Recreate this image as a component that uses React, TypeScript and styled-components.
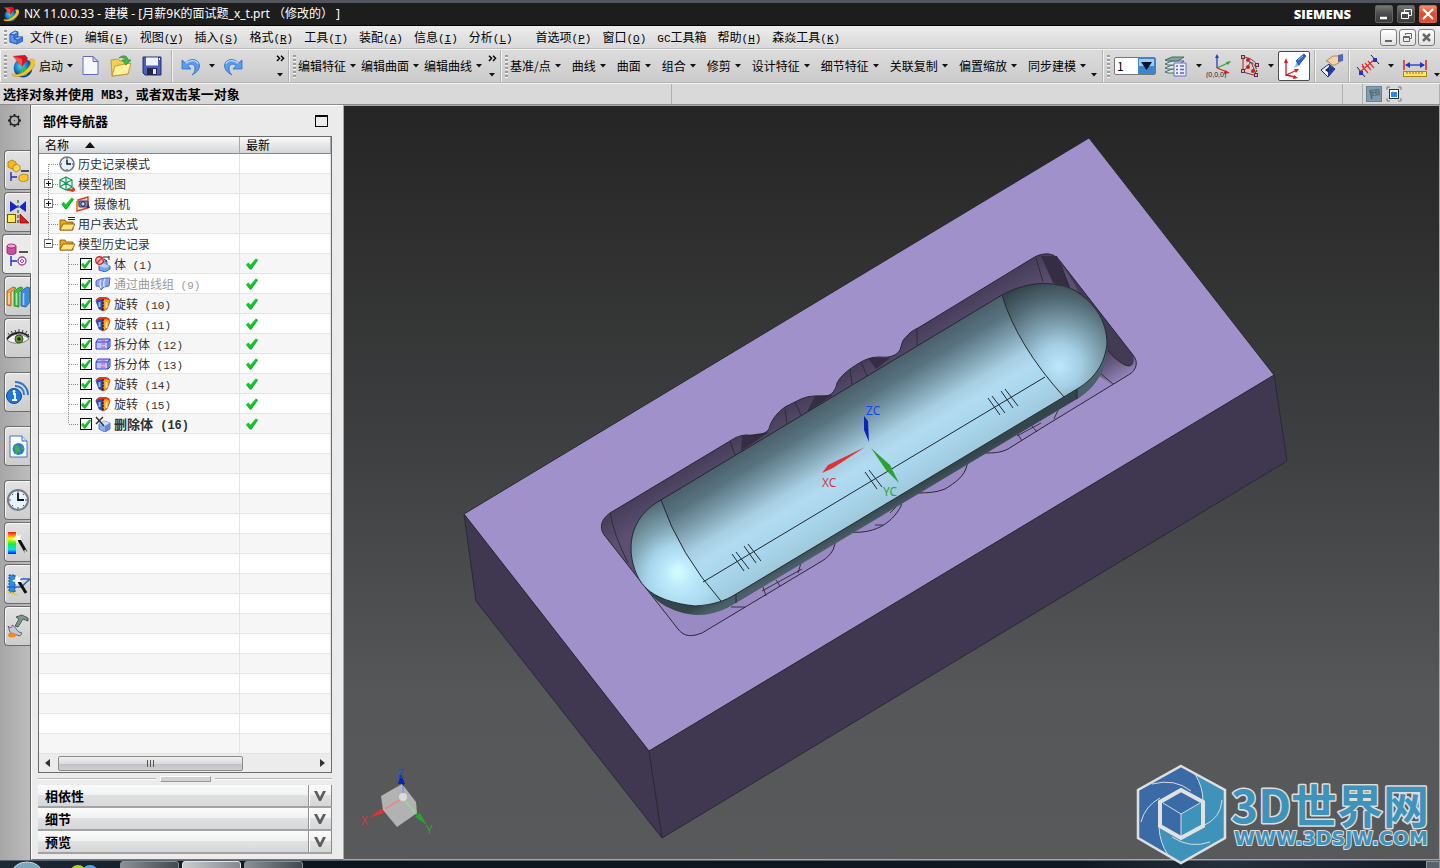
import React from "react";
import styled, { createGlobalStyle, css } from "styled-components";

const GlobalStyle = createGlobalStyle`
  *, *::before, *::after { box-sizing: border-box; }
  html, body { margin: 0; padding: 0; }
  body { overflow: hidden; background: #1d1d1d; }
  body, button, select, input, table {
    font-family: "Noto Sans CJK SC", "Liberation Sans", sans-serif;
    font-size: 12px;
    line-height: 16px;
    color: #000;
  }
  svg { display: block; flex: none; }
`;

const Frame = styled.div`
  position: relative;
  display: flex;
  flex-direction: column;
  height: 100vh;
  overflow: hidden;
`;

const Half = styled.span<{ $bold?: boolean }>`
  font-family: "Liberation Mono", monospace;
  font-size: ${(p) => (p.$bold ? 12 : 11)}px;
  line-height: 0;
  white-space: pre;
`;

/* ---------- title bar ---------- */
const TitleBar = styled.header`
  display: flex;
  align-items: center;
  flex: none;
  height: 26px;
  padding: 0 3px;
  border-top: 3px solid #54565e;
  border-bottom: 1px solid #000;
  background: #1d1d1d;
`;
const TitleText = styled.h1`
  flex: 1;
  margin: 0 0 0 5px;
  font: 400 12px/16px "Noto Sans", "Noto Sans CJK SC", sans-serif;
  text-spacing-trim: space-all;
  color: #fff;
  white-space: nowrap;
`;
const Brand = styled.span`
  margin-right: 24px;
  font: 800 13px/16px "Open Sans", sans-serif;
  color: #fff;
`;
const WindowButtons = styled.div<{ $gap: number }>`
  display: flex;
  gap: ${(p) => p.$gap}px;
`;
const WindowButton = styled.button<{ $close?: boolean }>`
  width: 18px;
  height: 18px;
  padding: 0;
  border: 1px solid ${(p) => (p.$close ? "#d9604a" : "#626262")};
  border-radius: 2px;
  background: ${(p) =>
    p.$close
      ? "linear-gradient(#f08b72, #dd4a2c 50%, #e6502f)"
      : "linear-gradient(#777, #4a4a4a 50%, #3a3a3a)"};
`;
const ChildButton = styled.button`
  width: 17px;
  height: 17px;
  padding: 0;
  border: 1px solid #7c7c7c;
  border-radius: 3px;
  background: linear-gradient(#fff, #e2e2e2);
`;

/* ---------- menu ---------- */
const MenuBar = styled.nav`
  display: flex;
  align-items: center;
  flex: none;
  height: 23px;
  padding: 0 5px 0 4px;
  border-bottom: 1px solid #bdbdbd;
  background: linear-gradient(#ececec, #d9d9d9);
`;
const Grip = styled.span<{ $tall?: boolean }>`
  flex: none;
  width: 3px;
  height: ${(p) => (p.$tall ? 23 : 15)}px;
  background: repeating-linear-gradient(#9d9d9d 0 2px, #f8f8f8 2px 3px, transparent 3px 4px);
`;
const MenuList = styled.div`
  display: flex;
  flex: 1;
  gap: 11px;
  margin-left: 7px;
`;
const MenuItem = styled.button<{ $apart?: boolean }>`
  padding: 0;
  margin-left: ${(p) => (p.$apart ? 12 : 0)}px;
  border: 0;
  background: none;
  white-space: nowrap;
`;

/* ---------- toolbar ---------- */
const ToolBar = styled.div`
  display: flex;
  flex: none;
  height: 34px;
  border-top: 1px solid #f3f3f3;
  border-bottom: 1px solid #b4b4b4;
  background: linear-gradient(#dcdcdc, #cbcbcb);
`;
const ToolGroup = styled.div<{ $gap: number; $width?: number; $grow?: boolean }>`
  display: flex;
  align-items: center;
  flex: ${(p) => (p.$grow ? "1 0 auto" : p.$width ? `0 0 ${p.$width}px` : "none")};
  gap: ${(p) => p.$gap}px;
  padding-left: 4px;
  border-right: 1px solid #b2b2b2;
  box-shadow: inset 1px 0 #f3f3f3;
`;
const ToolButton = styled.button<{ $lead?: number; $active?: boolean; $width?: number }>`
  display: flex;
  align-items: center;
  justify-content: center;
  flex: none;
  gap: 4px;
  padding: 0;
  margin-left: ${(p) => p.$lead ?? 0}px;
  width: ${(p) => (p.$width ? `${p.$width}px` : "auto")};
  border: 0;
  background: none;
  white-space: nowrap;
  ${(p) =>
    p.$active &&
    css`
      height: 30px;
      border: 1px solid #4c4c4c;
      border-radius: 2px;
      background: #fff;
    `}
`;
const ToolDivider = styled.span`
  flex: none;
  width: 2px;
  height: 100%;
  border-left: 1px solid #b2b2b2;
  background: #f3f3f3;
`;
const Overflow = styled.button<{ $auto?: boolean; $slim?: boolean }>`
  display: flex;
  flex-direction: column;
  align-items: center;
  justify-content: space-between;
  flex: none;
  width: ${(p) => (p.$slim ? 6 : 10)}px;
  height: 22px;
  margin: 0 ${(p) => (p.$slim ? 5 : 3)}px 0 ${(p) => (p.$auto ? "auto" : p.$slim ? "-6px" : "0")};
  padding: 0;
  border: 0;
  background: none;
`;
const ComboBox = styled.label`
  display: grid;
  width: 42px;
  height: 18px;
  border: 1px solid #777;
  border-radius: 2px;
  background: #fff;
  align-items: center;
  & > * { grid-area: 1 / 1; }
  & > svg { justify-self: end; pointer-events: none; }
`;
const ComboSelect = styled.select`
  appearance: none;
  width: 100%;
  height: 16px;
  padding: 0 2px;
  border: 0;
  background: none;
`;

/* ---------- cue line ---------- */
const CueLine = styled.div`
  display: flex;
  flex: none;
  height: 22px;
  border-top: 1px solid #f3f3f3;
  border-bottom: 1px solid #8c8c8c;
  background: #d9d9d9;
`;
const CueCell = styled.div<{ $width?: number }>`
  display: flex;
  align-items: center;
  gap: 4px;
  flex: ${(p) => (p.$width ? `0 0 ${p.$width}px` : "1 1 0")};
  padding-left: 3px;
  border-right: 1px solid #b0b0b0;
  font-size: 13px;
  font-weight: 700;
  white-space: nowrap;
`;

/* ---------- body ---------- */
const Body = styled.main`
  display: flex;
  flex: 1;
  min-height: 0;
`;
const Rail = styled.nav`
  display: flex;
  flex-direction: column;
  gap: 2px;
  flex: 0 0 31px;
  padding: 8px 0 0 4px;
  border-right: 1px solid #666;
  background: linear-gradient(90deg, #a6a6a6, #bcbcbc);
`;
const GearButton = styled.button`
  align-self: flex-start;
  height: 35px;
  padding: 0 0 20px 3px;
  border: 0;
  background: none;
`;
const RailTab = styled.button<{ $gap?: boolean; $active?: boolean }>`
  display: flex;
  align-items: center;
  justify-content: center;
  flex: none;
  height: 40px;
  margin: ${(p) => (p.$gap ? "12px" : "0")} ${(p) => (p.$active ? "-1px" : "0")} 0
    ${(p) => (p.$active ? "-2px" : "0")};
  padding: 0;
  border: 1px solid #6c6c6c;
  border-right: 0;
  border-radius: 4px 0 0 4px;
  background: ${(p) => (p.$active ? "#ebebeb" : "linear-gradient(#e2e2e2, #cdcdcd)")};
  box-shadow: inset 1px 1px #f6f6f6;
`;
const Navigator = styled.section`
  display: flex;
  flex-direction: column;
  flex: 0 0 312px;
  padding: 0 11px 0 6px;
  border-top: 1px solid #fff;
  border-bottom: 1px solid #777;
  border-left: 1px solid #fff;
  background: #ebebeb;
`;
const NavHeader = styled.div`
  display: flex;
  align-items: center;
  justify-content: space-between;
  flex: none;
  height: 30px;
  padding: 0 4px 0 5px;
`;
const NavTitle = styled.h2`
  margin: 0;
  font-size: 13px;
  line-height: 16px;
  font-weight: 700;
`;
const BoxButton = styled.button`
  width: 13px;
  height: 12px;
  padding: 0;
  border: 1px solid #000;
  border-top-width: 2px;
  background: none;
`;
const TreeBox = styled.div`
  display: flex;
  flex-direction: column;
  flex: 1;
  min-height: 0;
  border: 1px solid #6c6c6c;
  background: #fff;
`;
const TreeScroll = styled.div`
  flex: 1;
  min-height: 0;
  overflow: hidden;
`;
const Tree = styled.table`
  width: 100%;
  table-layout: fixed;
  border-collapse: separate;
  border-spacing: 0;
`;
const Head = styled.th`
  height: 17px;
  padding: 0 6px;
  border-bottom: 1px solid #888;
  border-right: 1px solid #a8a8a8;
  background: linear-gradient(#fafafa, #e6e8ea 50%, #d4d7d9);
  font-weight: 400;
  line-height: 16px;
  text-align: left;
`;
const HeadInner = styled.span`
  display: flex;
  align-items: center;
  gap: 16px;
`;
const Row = styled.tr`
  &:nth-child(odd) { background: #fff; }
  &:nth-child(even) { background: #f6f6f6; }
`;
const Cell = styled.td`
  height: 20px;
  padding: 0;
  border-bottom: 1px solid #e4e4e4;
  border-right: 1px solid #e4e4e4;
`;
const Node = styled.div<{ $dim?: boolean; $bold?: boolean }>`
  display: flex;
  align-items: center;
  height: 19px;
  color: ${(p) => (p.$dim ? "#9a9a9a" : "#303030")};
  font-size: ${(p) => (p.$bold ? 13 : 12)}px;
  font-weight: ${(p) => (p.$bold ? 700 : 400)};
  white-space: pre;
`;
const NodeLabel = styled.span`
  margin-left: 3px;
  line-height: 16px;
`;
const Status = styled.div`
  padding-left: 6px;
`;
const Tick = styled.label`
  display: grid;
  place-items: center;
  width: 12px;
  height: 12px;
  margin-right: 3px;
  & > * { grid-area: 1 / 1; }
  & > svg { pointer-events: none; }
`;
const TickInput = styled.input`
  appearance: none;
  width: 12px;
  height: 12px;
  margin: 0;
  border: 1px solid #000;
  background: #fff;
`;
const HScroll = styled.div`
  display: flex;
  align-items: center;
  justify-content: space-between;
  flex: none;
  height: 18px;
  padding: 0 6px;
  background: #ececec;
`;
const ScrollArrow = styled.button`
  padding: 0;
  border: 0;
  background: none;
`;
const Thumb = styled.div`
  display: flex;
  align-items: center;
  justify-content: center;
  width: 185px;
  height: 15px;
  margin: 0 auto 0 8px;
  border: 1px solid #8b8b8b;
  border-radius: 2px;
  background: linear-gradient(#f0f0f0, #dcdcde 50%, #bfc1c4 52%, #cfd0d2);
`;
const Splitter = styled.div`
  display: flex;
  align-items: center;
  gap: 4px;
  flex: none;
  height: 12px;
  &::before, &::after { content: ""; flex: 1; height: 2px; border-top: 1px solid #b8b8b8; background: #fff; }
`;
const SplitHandle = styled.span`
  width: 51px;
  height: 6px;
  border: 1px solid #999;
  border-top-color: #fff;
  border-left-color: #fff;
  background: #d2d2d2;
`;
const Sections = styled.div`
  flex: none;
  margin-bottom: 5px;
`;
const SectionButton = styled.button`
  display: flex;
  width: 100%;
  height: 23px;
  padding: 0;
  border: 0;
  border-bottom: 2px solid #a2a2a2;
  border-right: 1px solid #8a8a8a;
  background: linear-gradient(#fbfbfb, #f0f1f1 48%, #dfe1e2 50%, #d5d7d9);
  text-align: left;
`;
const SectionName = styled.span`
  flex: 1;
  padding-left: 7px;
  font-size: 13px;
  line-height: 22px;
  font-weight: 700;
`;
const SectionArrow = styled.span`
  display: flex;
  align-items: center;
  justify-content: center;
  width: 23px;
  height: 21px;
  border-left: 1px solid #909090;
  box-shadow: inset 1px 0 #fff;
`;
const Viewport = styled.section`
  flex: 1;
  min-width: 0;
  border: 1px solid #e59a48;
  background: linear-gradient(#252525, #3e3f40 45%, #565758 78%, #58595a);
`;

/* ---------- taskbar and watermark ---------- */
const TaskBar = styled.footer`
  display: flex;
  align-items: flex-start;
  flex: none;
  height: 8px;
  overflow: hidden;
  border-top: 1px solid #59636b;
  background: linear-gradient(90deg, #1c2a36, #0d151e 20%, #101923 75%, #25303d 85%, #121b26);
`;
const TaskButton = styled.button<{ $active?: boolean }>`
  width: 59px;
  height: 30px;
  margin-right: 3px;
  padding: 0;
  border: 1px solid ${(p) => (p.$active ? "#e3e6e8" : "#8a9298")};
  border-radius: 3px;
  background: ${(p) =>
    p.$active ? "linear-gradient(90deg, #c9cdd0, #85898d)" : "linear-gradient(90deg, #8b9196, #42494f)"};
`;
const Clock = styled.time`
  margin: 3px 48px 0 auto;
  color: #fff;
  line-height: 16px;
`;
const ShowDesktop = styled.button`
  width: 14px;
  height: 30px;
  padding: 0;
  border: 1px solid #8d959b;
  background: #59626a;
`;
const Watermark = styled.div`
  position: absolute;
  right: 4px;
  bottom: 3px;
`;

/* ---------- small drawings ---------- */
const Caret = () => (
  <svg width="6" height="4" viewBox="0 0 6 4"><path d="M0 0h6L3 3.5z" fill="#111" /></svg>
);
const More = () => (
  <svg width="9" height="7" viewBox="0 0 9 7" fill="none" stroke="#000" strokeWidth="1.4">
    <path d="M1 .7l2.6 2.6L1 6M5 .7l2.6 2.6L5 6" />
  </svg>
);
const Check = ({ size = 12 }: { size?: number }) => (
  <svg width={size} height={size} viewBox={size > 12 ? "-2 -1 15 15" : "0 0 12 12"}>
    <path d="M0 6.500L2.400 4.500l2 2.300L9.800.5l2.200 1.300L5.400 11.500H4z" fill="#12c92b" />
    <path d="M.8 7.200l3.600 4L11.800 2" fill="none" stroke="#0a8f1c" strokeWidth=".6" />
  </svg>
);
const Logo = ({ size }: { size: number }) => (
  <svg width={size} height={size} viewBox="0 0 24 24">
    <defs>
      <radialGradient id="globe" cx=".4" cy=".4"><stop offset="0" stopColor="#4fe0e0" /><stop offset=".6" stopColor="#1a83cf" /><stop offset="1" stopColor="#0d3f9c" /></radialGradient>
    </defs>
    <circle cx="12" cy="14" r="9.4" fill="url(#globe)" />
    <path d="M12 13c4 0 6 3 4 8-3 2-6 1-7-1s1-6 3-7z" fill="#2fc24a" opacity=".8" />
    <path d="M1 20c7 2 14-2 18-9 1-2 1-4-1-5 4-2 7 0 6 4-2 7-13 15-22 12z" fill="#f5c62c" stroke="#c08a12" strokeWidth=".5" />
    <path d="M2 2l12-1 3 3-6 9z" fill="#d8131c" /><path d="M2 2l9 11 0-8z" fill="#f4534f" />
  </svg>
);
const CubeIcon = () => (
  <svg width="14" height="15" viewBox="0 0 14 15" stroke="#1d4fae" strokeWidth=".7" strokeLinejoin="round">
    <path d="M1 4l5-3 3 1v5l4 0 1 1v3l-6 3-7-2z" fill="#3b7be0" />
    <path d="M1 4l5-3 3 1-4 3z" fill="#a9ccff" /><path d="M5 9l4-2h5l-6 3z" fill="#a9ccff" /><path d="M1 4l4 1v4l3 1v4l-7-2z" fill="#5b95f0" />
  </svg>
);
const NewIcon = () => (
  <svg width="20" height="22" viewBox="0 0 20 22"><path d="M2 1.5h10l5 5v13H2z" fill="#f7f7ff" stroke="#6668c4" /><path d="M12 1.5v5h5z" fill="#d3d6f6" stroke="#6668c4" /></svg>
);
const OpenIcon = () => (
  <svg width="24" height="24" viewBox="0 0 24 24">
    <path d="M2 6l7-1 2 2 8-1v14L3 22z" fill="#f2ce56" stroke="#b78d23" strokeWidth=".8" />
    <path d="M6 12l16-3-3 11-16 2z" fill="#fff09a" stroke="#b78d23" strokeWidth=".8" />
    <path d="M10 4c4-4 9-2 9 2h3l-5 5-4-5h3c0-2-3-3-6-2z" fill="#45b34e" stroke="#1f7f2b" strokeWidth=".6" />
  </svg>
);
const SaveIcon = () => (
  <svg width="22" height="20" viewBox="0 0 22 20">
    <path d="M2 1h18v18H4l-2-2z" fill="#4b5fb4" stroke="#23306f" /><path d="M5 1.5h12v8H5z" fill="#eef2ff" /><path d="M6 12h10v7H6z" fill="#23264a" /><path d="M12 13h3v5h-3z" fill="#dfe6ff" /><path d="M18 2h1v2h-1z" fill="#fff" />
  </svg>
);
const UndoIcon = ({ flip }: { flip?: boolean }) => (
  <svg width="20" height="20" viewBox="0 0 20 20">
    <g transform={flip ? "matrix(-1 0 0 1 20 0)" : undefined}>
      <path d="M1 4v9h9L7 9.500c3-2.500 7-1 7 2.500 0 3-1 5-3 7 4-2 7.500-5 7.500-9.500C18.500 4 10 .5 4.500 7z" fill="#5b9bea" stroke="#2f6fc8" strokeWidth=".8" />
      <path d="M5 7.500C9 3 16 4 17 8" fill="none" stroke="#b5d8ff" strokeWidth="1.200" />
    </g>
  </svg>
);
const LayersIcon = () => (
  <svg width="24" height="24" viewBox="0 0 24 24" stroke="#41625b" strokeWidth=".9">
    {[15, 11, 7, 3].map((y) => (<path key={y} d={`M1 ${y + 3}l7-3h12l-6 4H4z`} fill={y === 3 ? "#7da899" : "#dbe9e5"} />))}
    <path d="M10 9h12v13H10z" fill="#eef0ff" stroke="#5560d4" />
    <path d="M12 12h2M16 12h4M12 15.500h2M16 15.500h4M12 19h2M16 19h4" stroke="#5560d4" strokeWidth="1.400" />
  </svg>
);
const CsysIcon = () => (
  <svg width="26" height="24" viewBox="0 0 26 24" fill="none">
    <path d="M11 3v11" stroke="#2340c8" strokeWidth="1.300" /><path d="M11 0l-2 4h4z" fill="#2340c8" />
    <path d="M11 14l11-5" stroke="#28a53a" strokeWidth="1.300" /><path d="M25 7l-5 1 2 3z" fill="#28a53a" />
    <path d="M11 14l10 4" stroke="#d22" strokeWidth="1.300" /><path d="M24 19l-5-3-1 4z" fill="#d22" />
    <text x="0" y="23" fontSize="7" fill="#222" fontFamily="Liberation Sans">(0,0,0)</text>
  </svg>
);
const PointsIcon = () => (
  <svg width="20" height="24" viewBox="0 0 20 24" fill="none" stroke="#333">
    <path d="M3 3v15l14 4L11 8 3 18M3 3c6 0 12 4 15 9" stroke="#8d3030" /><path d="M9 8c5 0 8 5 8 13" strokeDasharray="2 1" />
    {[[3, 3], [17, 11], [3, 17], [16, 21]].map(([x, y]) => (<rect key={`${x}-${y}`} x={x - 1.500} y={y - 1.500} width="3" height="3" fill="#f2b84a" stroke="#5c2a6b" />))}
    {[[8, 6], [8, 13], [13, 17]].map(([x, y]) => (<circle key={`${x}-${y}`} cx={x} cy={y} r="2" fill="#e01818" stroke="none" />))}
  </svg>
);
const WcsIcon = () => (
  <svg width="26" height="26" viewBox="0 0 26 26" fill="none" stroke="#d41c1c" strokeWidth="1.300">
    <path d="M5 8v14l9-4M5 22l9 2" /><path d="M5 5l-2 5h4zM18 16l-5 0 2 4zM17 25l-4-3-1 4z" fill="#d41c1c" stroke="none" />
    <path d="M13 15l3-6 3 3z" fill="#7fb2ea" stroke="none" /><path d="M15 8l3-3 5-4 2 2-4 5-3 4z" fill="#2b62c8" stroke="#173d8e" strokeWidth=".7" /><path d="M17 7l5-4" stroke="#8ec0ff" strokeWidth="1" />
  </svg>
);
const HandIcon = () => (
  <svg width="24" height="24" viewBox="0 0 24 24">
    <path d="M1 16l8-6 6 5-7 8z" fill="#f4f6fb" stroke="#1c2c6b" /><path d="M9 10l6 5-7 8v-3z" fill="#1f3fa0" /><path d="M5 16l4-3v6z" fill="#1c2c6b" />
    <path d="M6 7l7-5 7 0v6l-5 3-3 0-3-3z" fill="#f4d2a2" stroke="#a8793f" strokeWidth=".8" /><path d="M18 1l5-1v7l-5 1z" fill="#4b66bd" />
  </svg>
);
const MeasureIcon = () => (
  <svg width="24" height="24" viewBox="0 0 24 24" fill="none">
    <path d="M4 18L19 5" stroke="#e03030" strokeWidth="1.300" /><path d="M6 12l6 7M9 9l6 7M12 7l6 7M8 13l-2-3" stroke="#e03030" strokeWidth="1.200" />
    <path d="M1 13l8 10M15 1l8 9" stroke="#222" /><rect x="3" y="17" width="4" height="4" fill="#2430d0" /><rect x="17" y="4" width="4" height="4" fill="#2430d0" />
  </svg>
);
const RulerIcon = () => (
  <svg width="26" height="24" viewBox="0 0 26 24">
    <path d="M2 6v10M24 6v10" stroke="#d22" strokeWidth="1.500" /><path d="M4 11h18" stroke="#1b36c8" strokeWidth="1.300" /><path d="M3 11l5-3v6zM23 11l-5-3v6z" fill="#1b36c8" />
    <rect x="1.500" y="17.500" width="23" height="5" fill="#ffe860" stroke="#a8861a" /><path d="M5 18v2M8 18v2M11 18v2M14 18v2M17 18v2M20 18v2" stroke="#b55a1a" />
  </svg>
);

type GlyphKind = "clock" | "view" | "camera" | "expr" | "folder" | "body" | "mesh" | "revolve" | "split" | "delete";
const Glyph = ({ kind }: { kind: GlyphKind }) => (
  <svg width="16" height="16" viewBox="0 0 16 16">
    {kind === "clock" && (<>
      <circle cx="8" cy="8" r="7" fill="#e4f1fc" stroke="#777" strokeWidth="1.600" />
      <path d="M8 3.500V8h4" fill="none" stroke="#111" strokeWidth="1.400" />
      <path d="M8 2v1M8 13v1M2 8h1M13 8h1" stroke="#234" />
    </>)}
    {kind === "view" && (<>
      <path d="M7 1l6 3v7l-6 3-6-3V4zM1 4l6 3 6-3M7 1v13M1 11l6-4 6 4" fill="none" stroke="#12995b" strokeWidth="1.200" />
      <path d="M8 14l6-1v-2l2 3-3 2v-1z" fill="#e8331c" stroke="#e8331c" />
    </>)}
    {kind === "camera" && (<>
      <path d="M3 4l10-3v11L2 15z" fill="#f6e7e0" stroke="#dd3b17" strokeWidth="1.400" /><path d="M2 5v9" stroke="#f08b2c" strokeWidth="2" />
      <rect x="4" y="5" width="9" height="6" rx="1" fill="#7c8cc4" stroke="#28316b" /><circle cx="8" cy="8" r="2.200" fill="#c5d4ff" stroke="#222" /><path d="M13 7l2 5-3 0z" fill="#333" />
    </>)}
    {(kind === "folder" || kind === "expr") && (<>
      <path d="M1 4h5l1 2h7v8H1z" fill="#e8a91b" stroke="#805400" strokeWidth=".8" /><path d="M4 8h12l-3 6H1z" fill="#ffe37c" stroke="#805400" strokeWidth=".8" />
      {kind === "expr" && <path d="M9 1.500h7M9 3.500h7" stroke="#1c249d" />}
    </>)}
    {kind === "body" && (<>
      <path d="M4 9l4-2V5h4v4l3 1v3l-5 3-6-2z" fill="#7aa5ee" stroke="#274a9d" strokeWidth=".8" /><path d="M4 9l4-2 4 2 3 1-5 2-6-2z" fill="#b9d2ff" />
      <path d="M8 1h6M14 0v4M9 3l3 2" stroke="#222" /><circle cx="4.500" cy="4.500" r="3.800" fill="#f3c9c6" stroke="#d92222" strokeWidth="1.400" /><path d="M2 7l5-5" stroke="#d92222" strokeWidth="1.400" />
    </>)}
    {kind === "mesh" && (<>
      <path d="M1 5c4-3 9-3 14-3l-1 8-5 1-3 3c0-3-2-4-5-4z" fill="#8ba0ea" stroke="#5269cf" /><path d="M6 4c-2 3-1 5 0 8M10 3c-2 3-1 5-1 8" fill="none" stroke="#e3e9ff" strokeWidth="1.300" />
    </>)}
    {kind === "revolve" && (<>
      <path d="M8 2C4 1 1 3 1 5l3 8 4 2z" fill="#2c4cc4" stroke="#1b2f85" strokeWidth=".6" /><path d="M8 2c4-1 7 1 7 3l-3 8-4 2z" fill="#f6a21a" stroke="#c52f12" strokeWidth=".8" />
      <path d="M1 5C2 1 5 1 8 1s6 0 7 4c-3-2-4-2-7-1-3-1-4-1-7 1z" fill="#e23c1a" /><path d="M4.500 6v5" stroke="#a9bdff" strokeWidth="2" /><path d="M11.500 6v6" stroke="#ffe489" strokeWidth="2" /><path d="M8 3v12" stroke="#111" strokeDasharray="2 1" />
    </>)}
    {kind === "split" && (<>
      <path d="M1 6l2-3h12v8l-2 2H1z" fill="#bcc7f8" stroke="#2f35e0" /><path d="M1 6h12v7M13 6l2-3" fill="none" stroke="#2f35e0" /><path d="M7 4v8M9 4v8" stroke="#e05068" strokeDasharray="2 1" />
    </>)}
    {kind === "delete" && (<>
      <path d="M4 8l5-3 6 2v6l-5 3-6-3z" fill="#8fb0ee" stroke="#3d65c4" strokeWidth=".8" /><path d="M4 8l6 2 5-3-6-2z" fill="#cfe0ff" /><path d="M10 10v6l5-3V7z" fill="#5f88df" />
      <path d="M1 1l8 9M8 1L1 8" stroke="#333" strokeWidth="1.500" />
    </>)}
  </svg>
);

const Branch = ({ box, first, last }: { box?: "+" | "-"; first?: boolean; last?: boolean }) => (
  <svg width="20" height="19" viewBox="0 0 20 19" fill="none" shapeRendering="crispEdges">
    <path d={`M9.500 ${first ? 10 : 0}V${last ? 10 : 19}M9.500 10.500H19`} stroke="#8a8a8a" strokeDasharray="1 1" />
    {box && (<>
      <rect x="5.500" y="5.500" width="8" height="8" fill="#fff" stroke="#777" />
      <path d={box === "+" ? "M7 9.500h5M9.500 7v5" : "M7 9.500h5"} stroke="#111" />
    </>)}
  </svg>
);
const SubBranch = ({ last }: { last?: boolean }) => (
  <svg width="41" height="19" viewBox="0 0 41 19" fill="none" shapeRendering="crispEdges">
    <path d={`M29.500 0V${last ? 10 : 19}M29.500 10.500H39`} stroke="#8a8a8a" strokeDasharray="1 1" />
  </svg>
);

/* ---------- resource bar icons ---------- */
const railIcons: { name: string; art: React.ReactNode; gap?: boolean; active?: boolean }[] = [
  { name: "装配导航器", art: (<>
    <path d="M2 4l4-2 4 2v5l-4 2-4-2z" fill="#f5b81f" stroke="#a36f00" strokeWidth=".7" /><path d="M7 8l4-2 3 2v4l-4 2-3-2z" fill="#ffd84c" stroke="#a36f00" strokeWidth=".7" />
    <path d="M15 13h8" stroke="#111" strokeWidth="1.400" /><path d="M5 14v9M5 19h6" stroke="#1f2fc0" strokeWidth="1.400" /><path d="M13 18l4-2 5 1v5l-5 2-4-2z" fill="#ffc62a" stroke="#a36f00" strokeWidth=".7" />
  </>) },
  { name: "约束导航器", art: (<>
    <path d="M4 1v11l8-5zM20 1v11l-7-5z" fill="#1327c9" /><path d="M12 0v24" stroke="#222" strokeDasharray="3 2" /><rect x="1.500" y="14.500" width="8" height="8" fill="#ffec4a" stroke="#6d5a00" /><path d="M14 14v9h9z" fill="#e21b1b" stroke="#700" strokeWidth=".7" />
  </>) },
  { name: "部件导航器", active: true, art: (<>
    <path d="M2 4v7c2 2 7 2 9 0V4z" fill="#cf4fa5" stroke="#7c1e5f" strokeWidth=".8" /><ellipse cx="6.500" cy="4" rx="4.500" ry="2" fill="#f0a6d8" stroke="#7c1e5f" strokeWidth=".8" />
    <path d="M14 10h9" stroke="#111" strokeWidth="1.400" /><path d="M6 14v10M6 19h6" stroke="#1f2fc0" strokeWidth="1.400" /><circle cx="17" cy="19" r="4" fill="#fff" stroke="#9b3f9b" strokeWidth="1.300" /><circle cx="17" cy="19" r="1.500" fill="none" stroke="#9b3f9b" />
  </>) },
  { name: "重用库", art: (<>
    <path d="M1 7l6-4 3 1-5 4v14l-4-1z" fill="#f2a03a" stroke="#8c4c00" strokeWidth=".7" /><path d="M8 7l6-4 3 1-4 4v15l-5-1z" fill="#3ac13f" stroke="#177c1b" strokeWidth=".7" /><path d="M15 7l6-4 3 1v14l-4 5-5-1z" fill="#3b8be0" stroke="#184e94" strokeWidth=".7" />
    <path d="M3 9v11M10.500 9v12M17.500 9v12" stroke="#fff" strokeWidth="1.500" opacity=".6" />
  </>) },
  { name: "视图", art: (<>
    <path d="M1 14c5-7 15-8 22-1-6 5-16 6-22 1z" fill="#f2f2f2" stroke="#555" strokeWidth=".7" /><circle cx="13" cy="13" r="4" fill="#6f9c35" stroke="#33521a" /><circle cx="13" cy="13" r="1.800" fill="#16240a" />
    <path d="M1 13c5-7 15-9 22-2" fill="none" stroke="#222" strokeWidth="1.800" /><path d="M4 10L2 7M7 8L5 5M10 7L9 4M13 6V3M16 7l1-3M19 8l2-3M21 10l2-2" fill="none" stroke="#444" />
  </>) },
  { name: "信息", gap: true, art: (<>
    <path d="M9 2c8 0 13 6 13 13M9 6c6 0 9 4 9 9" fill="none" stroke="#2f74cf" strokeWidth="2" /><circle cx="8" cy="16" r="7.500" fill="#1e78dc" stroke="#0e4b9b" /><path d="M7 14h2v6M6 20h5" stroke="#fff" strokeWidth="1.800" fill="none" /><circle cx="8" cy="11.500" r="1.400" fill="#fff" />
  </>) },
  { name: "网页", gap: true, art: (<>
    <path d="M4 2h12l5 5v16H4z" fill="#fff" stroke="#4571b8" /><path d="M16 2v5h5" fill="#d6e5f9" stroke="#4571b8" /><circle cx="12.500" cy="15" r="6" fill="#2b7fce" /><path d="M8 13c3-4 5 0 6 2s-2 5-4 4zM15 11l3 4-2 1z" fill="#43ae49" />
  </>) },
  { name: "历史记录", gap: true, art: (<>
    <circle cx="12" cy="12" r="10" fill="#e5f2ff" stroke="#777c82" strokeWidth="2" /><path d="M12 5v7h6" fill="none" stroke="#111" strokeWidth="1.800" /><path d="M12 3v2M12 19v2M3 12h2M19 12h2M6 6l1 1M18 6l-1 1M6 18l1-1M18 18l-1-1" stroke="#456" />
  </>) },
  { name: "可视化", art: (<>
    <rect x="2" y="2" width="8" height="22" fill="url(#spectrum)" /><path d="M12 8l8 14" stroke="#111" strokeWidth="3" /><path d="M19 20l1 3" stroke="#ddd" strokeWidth="2" /><path d="M11 3l1 3 3-1-1 3 2 2-4 0-1 3-2-3-3-1 3-2z" fill="#fff" />
  </>) },
  { name: "加工向导", art: (<>
    <rect x="3" y="3" width="6" height="17" fill="#2c8de0" stroke="#1554a0" strokeDasharray="2 1" /><path d="M10 7h14l-9 8H1" fill="none" stroke="#2c62c8" strokeWidth="1.500" /><path d="M2 20l10 3" stroke="#f0c516" strokeWidth="2" strokeDasharray="2 1" />
    <path d="M12 8l8 13" stroke="#111" strokeWidth="3" /><path d="M11 3l1 3 3-1-1 3 2 2-4 0-1 3-2-3-3-1 3-2z" fill="#fff" />
  </>) },
  { name: "角色", art: (<>
    <path d="M10 3l6-2 6 3v3l-5-2-5 8-3-1 4-7z" fill="#7f988c" stroke="#33423b" strokeWidth=".8" /><path d="M2 12c2 3 5 1 4-1 4 2 4 5 7 7l3 1-2 3c-4-2-8-1-10-4z" fill="#c4c9d8" stroke="#4b4f66" strokeWidth=".8" /><ellipse cx="6" cy="21" rx="4" ry="2.500" fill="#f28b1e" />
  </>) },
];

/* ---------- data ---------- */
const menus: { label: string; accel?: string; pre?: string; apart?: boolean }[] = [
  { label: "文件", accel: "F" }, { label: "编辑", accel: "E" }, { label: "视图", accel: "V" }, { label: "插入", accel: "S" },
  { label: "格式", accel: "R" }, { label: "工具", accel: "T" }, { label: "装配", accel: "A" }, { label: "信息", accel: "I" },
  { label: "分析", accel: "L" }, { label: "首选项", accel: "P", apart: true }, { label: "窗口", accel: "O" },
  { label: "工具箱", pre: "GC" }, { label: "帮助", accel: "H" }, { label: "森焱工具", accel: "K" },
];
const nodes: { label: string; n?: number; kind: GlyphKind; box?: "+" | "-"; child?: boolean; dim?: boolean; bold?: boolean; first?: boolean; last?: boolean; mark?: boolean }[] = [
  { label: "历史记录模式", kind: "clock", first: true },
  { label: "模型视图", kind: "view", box: "+" },
  { label: "摄像机", kind: "camera", box: "+", mark: true },
  { label: "用户表达式", kind: "expr" },
  { label: "模型历史记录", kind: "folder", box: "-", last: true },
  { label: "体", n: 1, kind: "body", child: true },
  { label: "通过曲线组", n: 9, kind: "mesh", child: true, dim: true },
  { label: "旋转", n: 10, kind: "revolve", child: true },
  { label: "旋转", n: 11, kind: "revolve", child: true },
  { label: "拆分体", n: 12, kind: "split", child: true },
  { label: "拆分体", n: 13, kind: "split", child: true },
  { label: "旋转", n: 14, kind: "revolve", child: true },
  { label: "旋转", n: 15, kind: "revolve", child: true },
  { label: "删除体", n: 16, kind: "delete", child: true, bold: true, last: true },
];
const blankRows = Array.from({ length: 16 }, (_, i) => i);

/* ---------- 3D scene ---------- */
const POCKET =
  "M610 513L730 441C736 437 741 435 747 435C754 436 764 436 769 429C771 420 777 413 785 407L797 401C808 395 815 396 825 396C832 396 836 389 837 383C840 377 845 373 850 369C862 361 868 357 880 357C889 358 896 356 900 350C902 344 902 340 907 336C910 332 914 330 918 328L1033 258C1043 252 1054 252 1060 261L1133 355C1139 362 1136 370 1130 374L1040 429L1008 449C1000 453 993 453 985 453C975 452 968 458 967 465C965 476 955 483 945 489C935 493 925 493 912 493C903 495 902 500 901 506C896 516 888 523 880 527C870 532 860 533 845 532C836 535 836 542 833 550C830 555 827 558 822 561L702 633C692 637 684 637 678 629L605 536C600 530 599 521 610 513Z";
const FACE =
  "M661 500L1002 295C1024 283 1047 280 1070 288C1092 299 1107 319 1107 344C1105 362 1096 378 1077 389L736 594C725 601 713 605 695 606C675 604 655 598 645 587C636 578 631 562 631 548C631 528 641 511 661 500Z";
const LEFT_CAP = "M661 500C641 511 631 528 631 548C631 562 636 578 645 587C655 598 675 604 695 606C705 606 713 604 721 601Q680 555 661 500Z";
const RIGHT_CAP = "M1002 295C1024 283 1047 280 1070 288C1092 299 1107 319 1107 344C1105 362 1096 378 1077 389L1064 397Q1017 345 1002 295Z";

const Mark = ({ x, y }: { x: number; y: number }) => (
  <path d={`M${x - 6} ${y - 10}l12 17M${x - 2} ${y - 12}l13 17`} />
);

const Scene = () => (
  <svg width="100%" height="100%" viewBox="344 106 1095 753" fontFamily="Noto Sans, sans-serif" fontSize="12">
    <defs>
      <linearGradient id="tube" gradientUnits="userSpaceOnUse" x1="800" y1="417" x2="861" y2="519">
        <stop offset="0" stopColor="#4b616b" /><stop offset=".15" stopColor="#587380" /><stop offset=".32" stopColor="#7d9eae" />
        <stop offset=".5" stopColor="#a7cee2" /><stop offset=".62" stopColor="#b1dbf1" /><stop offset=".8" stopColor="#a9d6ed" /><stop offset="1" stopColor="#9fc9dc" />
      </linearGradient>
      <radialGradient id="capLeft" gradientUnits="userSpaceOnUse" cx="690" cy="590" fx="677" fy="571" r="95">
        <stop offset="0" stopColor="#d4ffff" /><stop offset=".15" stopColor="#bdeafb" /><stop offset=".36" stopColor="#a7d5eb" /><stop offset=".62" stopColor="#7fa2b1" /><stop offset="1" stopColor="#4f6771" />
      </radialGradient>
      <radialGradient id="capRight" gradientUnits="userSpaceOnUse" cx="1059" cy="366" r="88">
        <stop offset="0" stopColor="#bde7fb" /><stop offset=".25" stopColor="#a4cee3" /><stop offset=".5" stopColor="#7a9baa" /><stop offset=".75" stopColor="#536b76" /><stop offset="1" stopColor="#34444b" />
      </radialGradient>
      <linearGradient id="wall" gradientUnits="userSpaceOnUse" x1="820" y1="386" x2="835" y2="411">
        <stop offset="0" stopColor="#463d59" /><stop offset="1" stopColor="#5b4f72" />
      </linearGradient>
      <linearGradient id="strip" gradientUnits="userSpaceOnUse" x1="900" y1="495" x2="906" y2="506">
        <stop offset="0" stopColor="#35454c" /><stop offset="1" stopColor="#4b616a" />
      </linearGradient>
      <linearGradient id="corner" gradientUnits="userSpaceOnUse" x1="1100" y1="350" x2="1120" y2="382">
        <stop offset="0" stopColor="#473e5a" /><stop offset=".5" stopColor="#6a5d85" /><stop offset="1" stopColor="#9787bf" />
      </linearGradient>
    </defs>
    <path d="M464 514L1089 138L1274 375L649 751Z" fill="#a191cb" />
    <path d="M464 514L649 751L662 838L476 601ZM649 751L1274 375L1287 461L662 838Z" fill="#403850" />
    <path d="M464 514L1089 138L1274 375L1287 461L662 838L476 601ZM464 514L649 751L1274 375M649 751L662 838" fill="none" stroke="#2b2833" />

    <path d={POCKET} fill="#9a8ac3" />
    <path d="M610 513L730 441C736 437 741 435 747 435C754 436 764 436 769 429C771 420 777 413 785 407L797 401C808 395 815 396 825 396C832 396 836 389 837 383C840 377 845 373 850 369C862 361 868 357 880 357C889 358 896 356 900 350C902 344 902 340 907 336C910 332 914 330 918 328L1033 258C1043 252 1054 252 1060 261L1133 355C1139 366 1130 368 1120 362L1080 340L700 560L645 587L605 536C600 530 599 521 610 513Z" fill="url(#wall)" />
    <path d="M1107 340L1133 355C1139 362 1136 370 1130 374L1112 385L1090 370Z" fill="url(#corner)" />
    <path d="M1075 285L1060 261L1133 355C1135 362 1133 367 1128 366C1120 364 1110 355 1105 348Z" fill="#433a54" />
    <path d="M1041 256l16 0 13 31-17-4z" fill="#352d43" />
    <path d="M742 436l27-4-28 19zM815 396l18-1-26 17zM868 358l22 0-14 11z" fill="#352d43" />
    <path d={POCKET} fill="none" stroke="#2b2833" />
    <g fill="none" stroke="#2b2833" strokeWidth=".9">
      <path d="M610 513Q614 535 628 563M730 441l5 14M785 409l2 15M795 402l6 13M850 370l2 14M861 362l6 14M917 328l0 17M1036 258l7 24M1060 261l9 27M1108 350Q1122 367 1130 366M1100 373l13 11M1058 410l-4 9M801 563l-3 10M731 607l14 0M762 591l40-22M763 587l3 9M776 580l4 6M1017 436l24-13M1017 433l5 8M1031 425l6 7M875 525l8 0M890 513l6-6" />
    </g>

    <path d="M645 587C655 603 675 614 698 615C714 615 726 609 736 603L1077 399C1095 388 1107 370 1107 346L1077 389L736 594Z" fill="url(#strip)" />
    <path d="M1077 399C1095 388 1107 370 1107 346L1077 389Z" fill="#4a626c" />
    <path d={FACE} fill="url(#tube)" />
    <path d={LEFT_CAP} fill="url(#capLeft)" />
    <path d={RIGHT_CAP} fill="url(#capRight)" />
    <g fill="none" stroke="#20292e">
      <path d={FACE} />
      <path d="M661 500Q680 555 721 601M1002 295Q1017 345 1064 397M703 582L1045 377M736 594v9M1077 389v10" />
      <Mark x={738} y={564} /><Mark x={750} y={556} /><Mark x={871} y={482} /><Mark x={994} y={408} /><Mark x={1007} y={401} />
    </g>

    <path d="M864 416l4 5 1 21-5-12z" fill="#0626b8" /><path d="M865 447l-32 21-11 5 6-8z" fill="#dd3438" /><path d="M871 448l19 17 9 18-13-13z" fill="#2da034" />
    <text x="866" y="415" fill="#0b48ff">ZC</text><text x="822" y="487" fill="#d23b40">XC</text><text x="883" y="496" fill="#2ea636">YC</text>

    <g>
      <path d="M403 798l-22 13" stroke="#dd3438" strokeWidth="2" /><path d="M369 818l12-9 3 4z" fill="#dd3438" />
      <path d="M403 798l14 17" stroke="#2da034" strokeWidth="2" /><path d="M427 825l-12-8 5-4z" fill="#2da034" />
      <path d="M403 798v-16" stroke="#0626b8" strokeWidth="2" /><path d="M401 774l4 10h-7z" fill="#0626b8" />
      <path d="M381 796L402 784L416 802L417 813L397 827L383 810Z" fill="#c9c9c9" opacity=".8" />
      <path d="M403 798l-18 11" stroke="#e08a8c" strokeWidth="1.500" /><path d="M403 798l12 15" stroke="#9bd09e" strokeWidth="1.500" /><path d="M403 798v-12" stroke="#8d9ad6" strokeWidth="1.500" />
      <circle cx="403" cy="797" r="4" fill="#dcdcdc" />
      <text x="397" y="778" fill="#0b48ff">Z</text><text x="361" y="825" fill="#d23b40">X</text><text x="426" y="834" fill="#2ea636">Y</text>
    </g>
  </svg>
);

const WatermarkArt = () => (
  <svg width="300" height="102" viewBox="1136 763 300 102">
    <path d="M1181 766L1225 790V838L1181 863L1138 838V790Z" fill="#3a6ba6" />
    <path d="M1195 774L1225 790V838L1181 863L1168 855Q1160 843 1159 828L1181 839L1203 826V801Q1203 787 1195 774Z" fill="#3f93bb" />
    <path d="M1152 784Q1175 778 1191 791M1141 822Q1145 806 1160 798M1222 800Q1221 818 1203 826M1172 837Q1190 849 1210 842M1195 774Q1203 787 1203 801M1168 855Q1160 843 1159 828" fill="none" stroke="#d6dde3" strokeWidth="1" />
    <path d="M1181 766L1225 790V838L1181 863L1138 838V790Z" fill="none" stroke="#dfdfdf" strokeWidth="2.500" />
    <path d="M1181 790L1203 802V826L1181 838L1160 826V802Z" fill="#3a6ba6" />
    <path d="M1181 814L1201 803V826L1181 838Z" fill="#3f93bb" />
    <path d="M1163 803L1181 814L1200 803M1181 814V836" fill="none" stroke="#d6dde3" />
    <path d="M1181 790L1203 802V826L1181 838L1160 826V802Z" fill="none" stroke="#e2e2e2" strokeWidth="4" />
    <g fill="#3f93bb" stroke="#dedede" strokeLinejoin="round" paintOrder="stroke">
      <text x="1231" y="823" fontSize="46" fontWeight="700" strokeWidth="3" fontFamily="Noto Sans CJK SC, sans-serif">3D世界网</text>
      <text x="1234" y="845" fontSize="19" fontWeight="700" strokeWidth="2" fontFamily="DejaVu Sans, sans-serif">WWW.3DSJW.COM</text>
    </g>
  </svg>
);

const Drop = ({ children, lead }: { children: string; lead?: number }) => (
  <ToolButton $lead={lead}>{children}<Caret /></ToolButton>
);

export default function App() {
  return (
    <Frame>
      <GlobalStyle />
      <TitleBar>
        <Logo size={16} />
        <TitleText>NX 11.0.0.33 - 建模 - [月薪9K的面试题_x_t.prt （修改的） ]</TitleText>
        <Brand>SIEMENS</Brand>
        <WindowButtons $gap={4}>
          <WindowButton aria-label="最小化"><svg width="16" height="16"><path d="M4 12h7" stroke="#fff" strokeWidth="2.500" /></svg></WindowButton>
          <WindowButton aria-label="还原"><svg width="16" height="16" fill="none" stroke="#fff"><path d="M6.500 6V3.500h7v6H11" /><path d="M3.500 6.500h7v6h-7zM3.500 7.500h7" /></svg></WindowButton>
          <WindowButton $close aria-label="关闭"><svg width="16" height="16"><path d="M3 3l10 10M13 3L3 13" stroke="#fff" strokeWidth="2.200" /></svg></WindowButton>
        </WindowButtons>
      </TitleBar>

      <MenuBar>
        <Grip />
        <ToolButton $lead={2} aria-label="应用模块"><CubeIcon /></ToolButton>
        <MenuList>
          {menus.map((m) => (
            <MenuItem key={m.label + (m.accel ?? "")} $apart={m.apart}>
              {m.pre && <Half>{m.pre}</Half>}{m.label}{m.accel && <Half>(<u>{m.accel}</u>)</Half>}
            </MenuItem>
          ))}
        </MenuList>
        <WindowButtons $gap={2}>
          <ChildButton aria-label="最小化窗口"><svg width="15" height="15"><path d="M4 11h7" stroke="#666" strokeWidth="2" /></svg></ChildButton>
          <ChildButton aria-label="还原窗口"><svg width="15" height="15" fill="none" stroke="#666"><path d="M5.500 5V3.500h6v5H10" /><path d="M3.500 6.500h6v5h-6zM3.500 7.500h6" /></svg></ChildButton>
          <ChildButton aria-label="关闭窗口"><svg width="15" height="15"><path d="M4 4l7 7M11 4l-7 7" stroke="#666" strokeWidth="2.500" /></svg></ChildButton>
        </WindowButtons>
      </MenuBar>

      <ToolBar>
        <ToolGroup $gap={8} $width={289}>
          <Grip $tall />
          <ToolButton $lead={-4}><Logo size={24} />启动<Caret /></ToolButton>
          <ToolButton aria-label="新建"><NewIcon /></ToolButton>
          <ToolButton aria-label="打开"><OpenIcon /></ToolButton>
          <ToolButton aria-label="保存"><SaveIcon /></ToolButton>
          <ToolDivider />
          <ToolButton aria-label="撤消"><UndoIcon /></ToolButton>
          <ToolButton aria-label="撤消列表"><Caret /></ToolButton>
          <ToolButton aria-label="重做"><UndoIcon flip /></ToolButton>
          <Overflow $auto aria-label="更多"><More /><Caret /></Overflow>
        </ToolGroup>
        <ToolGroup $gap={5} $width={211}>
          <Grip $tall />
          <Drop lead={-3}>编辑特征</Drop>
          <Drop>编辑曲面</Drop>
          <Drop>编辑曲线</Drop>
          <Overflow $auto aria-label="更多编辑"><More /><Caret /></Overflow>
        </ToolGroup>
        <ToolGroup $gap={11}>
          <Grip $tall />
          <Drop lead={-9}>基准/点</Drop>
          {["曲线", "曲面", "组合", "修剪", "设计特征", "细节特征", "关联复制", "偏置缩放", "同步建模"].map((t) => <Drop key={t}>{t}</Drop>)}
          <Overflow $slim aria-label="更多特征"><span /><Caret /></Overflow>
        </ToolGroup>
        <ToolGroup $gap={4} $grow>
          <Grip $tall />
          <ComboBox aria-label="工作图层">
            <ComboSelect defaultValue="1"><option>1</option></ComboSelect>
            <svg width="17" height="16"><rect width="17" height="16" fill="#3d86cf" /><rect x="1" y="1" width="15" height="7" fill="#9fcaf2" /><path d="M3 4h11l-5.500 8z" fill="#0a1430" /></svg>
          </ComboBox>
          <ToolButton $lead={4} aria-label="图层设置"><LayersIcon /></ToolButton>
          <ToolButton $lead={4} aria-label="图层列表"><Caret /></ToolButton>
          <ToolButton aria-label="坐标原点"><CsysIcon /></ToolButton>
          <ToolButton $lead={4} aria-label="捕捉点"><PointsIcon /></ToolButton>
          <ToolButton $lead={4} aria-label="捕捉列表"><Caret /></ToolButton>
          <ToolButton $active $width={32} aria-label="显示 WCS"><WcsIcon /></ToolButton>
          <ToolDivider />
          <ToolButton aria-label="编辑对象显示"><HandIcon /></ToolButton>
          <ToolDivider />
          <ToolButton $lead={2} aria-label="测量"><MeasureIcon /></ToolButton>
          <ToolButton $lead={4} aria-label="测量列表"><Caret /></ToolButton>
          <ToolButton $lead={4} aria-label="测量距离"><RulerIcon /></ToolButton>
          <Overflow aria-label="更多工具"><span /><Caret /></Overflow>
        </ToolGroup>
      </ToolBar>

      <CueLine>
        <CueCell><span>选择对象并使用<Half $bold> MB3</Half>，或者双击某一对象</span></CueCell>
        <CueCell />
        <CueCell $width={20} />
        <CueCell $width={77}>
          <svg width="16" height="16"><rect x=".5" y=".5" width="15" height="15" fill="#7e9cab" stroke="#68838f" /><path d="M4 4l2 9" stroke="#4f666f" strokeWidth="1.500" /><path d="M4.500 4.500l8-1 1 5-8 1M7 4v5M10 4v5M5 7l8-1" fill="none" stroke="#566d77" strokeWidth="1.200" /></svg>
          <svg width="16" height="16" fill="none"><path d="M1 4V1h3M12 1h3v3M15 12v3h-3M4 15H1v-3" stroke="#777" /><rect x="3.500" y="3.500" width="9" height="9" fill="#fff" stroke="#234" /><rect x="5" y="6" width="6" height="5" fill="#2f86dd" /></svg>
        </CueCell>
      </CueLine>

      <Body>
        <Rail>
          <GearButton aria-label="资源条选项">
            <svg width="15" height="15" viewBox="0 0 15 15" fill="none" stroke="#222"><circle cx="7.500" cy="7.500" r="4.500" strokeWidth="1.600" /><circle cx="7.500" cy="7.500" r=".6" fill="#222" stroke="none" /><path d="M7.500 1v2M7.500 12v2M1 7.500h2M12 7.500h2M3 3l1 1M12 3l-1 1M3 12l1-1M12 12l-1-1" strokeWidth="1.800" /></svg>
          </GearButton>
          {railIcons.map((r) => (
            <RailTab key={r.name} aria-label={r.name} $gap={r.gap} $active={r.active}>
              <svg width="24" height="24" viewBox="0 0 24 24">
                <defs>
                  <linearGradient id="spectrum" x2="0" y2="1"><stop offset="0" stopColor="#f11" /><stop offset=".3" stopColor="#ff0" /><stop offset=".55" stopColor="#1e3" /><stop offset=".8" stopColor="#0df" /><stop offset="1" stopColor="#11f" /></linearGradient>
                </defs>
                {r.art}
              </svg>
            </RailTab>
          ))}
        </Rail>

        <Navigator>
          <NavHeader><NavTitle>部件导航器</NavTitle><BoxButton aria-label="浮动" /></NavHeader>
          <TreeBox>
            <TreeScroll>
              <Tree>
                <colgroup><col width="201" /><col /></colgroup>
                <thead>
                  <tr>
                    <Head><HeadInner>名称<svg width="10" height="6"><path d="M0 6l5-6 5 6z" fill="#111" /></svg></HeadInner></Head>
                    <Head>最新</Head>
                  </tr>
                </thead>
                <tbody>
                  {nodes.map((n) => (
                    <Row key={n.label + (n.n ?? "")}>
                      <Cell>
                        <Node $dim={n.dim} $bold={n.bold}>
                          {n.child ? <SubBranch last={n.last} /> : <Branch box={n.box} first={n.first} last={n.last} />}
                          {n.child && <Tick><TickInput type="checkbox" defaultChecked aria-label={n.label} /><Check size={10} /></Tick>}
                          {n.mark && <Check size={16} />}
                          <Glyph kind={n.kind} />
                          <NodeLabel>{n.label}{n.n && <Half $bold={n.bold}>{` (${n.n})`}</Half>}</NodeLabel>
                        </Node>
                      </Cell>
                      <Cell>{n.child && <Status><Check /></Status>}</Cell>
                    </Row>
                  ))}
                  {blankRows.map((i) => (<Row key={i}><Cell /><Cell /></Row>))}
                </tbody>
              </Tree>
            </TreeScroll>
            <HScroll>
              <ScrollArrow aria-label="向左滚动"><svg width="5" height="8"><path d="M5 0v8L0 4z" fill="#333" /></svg></ScrollArrow>
              <Thumb><svg width="9" height="7"><path d="M1.500 0v7M4.500 0v7M7.500 0v7" stroke="#555" /></svg></Thumb>
              <ScrollArrow aria-label="向右滚动"><svg width="5" height="8"><path d="M0 0v8l5-4z" fill="#333" /></svg></ScrollArrow>
            </HScroll>
          </TreeBox>
          <Splitter><SplitHandle /></Splitter>
          <Sections>
            {["相依性", "细节", "预览"].map((s) => (
              <SectionButton key={s}>
                <SectionName>{s}</SectionName>
                <SectionArrow><svg width="12" height="10"><path d="M0 0h3l3 6 3-6h3L7 10H5z" fill="#5c5c5c" /></svg></SectionArrow>
              </SectionButton>
            ))}
          </Sections>
        </Navigator>

        <Viewport aria-label="图形窗口"><Scene /></Viewport>
      </Body>

      <TaskBar>
        <svg width="120" height="8" viewBox="0 0 120 8">
          <ellipse cx="27" cy="12" rx="15" ry="11" fill="#7ea6bb" stroke="#c8d8e0" /><circle cx="78" cy="12" r="8" fill="#b9d414" /><circle cx="90" cy="12" r="8" fill="#45aee8" />
        </svg>
        <TaskButton aria-label="浏览器"><svg width="57" height="8"><path d="M22 8c4-6 12-5 18-2" fill="none" stroke="#3cae3c" strokeWidth="3" /></svg></TaskButton>
        <TaskButton $active aria-label="NX"><svg width="57" height="8"><path d="M15 3l14-1-2 6H16z" fill="#d9213a" /></svg></TaskButton>
        <TaskButton aria-label="文件夹"><svg width="57" height="8"><path d="M14 8V6h14v2z" fill="#cdb173" /></svg></TaskButton>
        <Clock>21:05</Clock>
        <ShowDesktop aria-label="显示桌面" />
      </TaskBar>

      <Watermark><WatermarkArt /></Watermark>
    </Frame>
  );
}
